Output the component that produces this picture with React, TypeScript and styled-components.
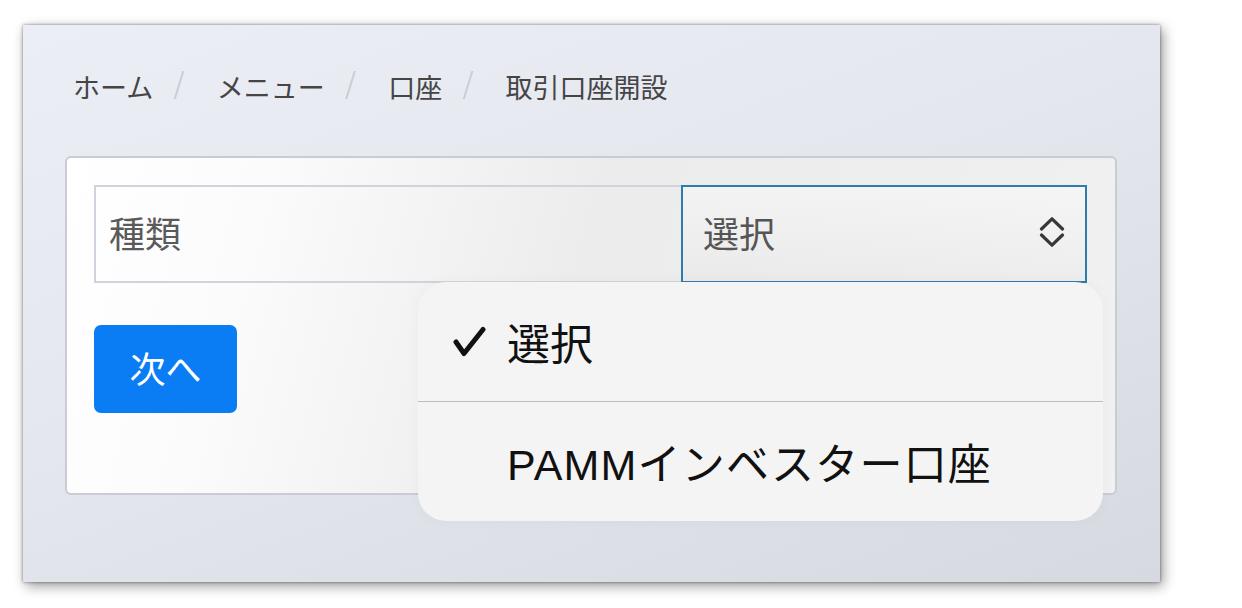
import React from "react";
import styled, { createGlobalStyle } from "styled-components";

const GlobalStyle = createGlobalStyle`
  html, body {
    margin: 0;
    padding: 0;
    background: #ffffff;
  }
  body {
    font-family: "Noto Sans CJK JP", "Noto Sans", sans-serif;
  }
`;

const Page = styled.div`
  width: 1242px;
  height: 608px;
  box-sizing: border-box;
  padding: 25px 0 0 23px;
  overflow: hidden;
`;

const Screen = styled.div`
  width: 1137px;
  height: 557px;
  box-sizing: border-box;
  padding: 42px 43px 0 42px;
  display: flex;
  flex-direction: column;
  background: linear-gradient(160deg, #ebeef5 0%, #e4e7ee 45%, #d6d9e0 100%);
  box-shadow: 0 0 3px rgba(0, 0, 0, 0.45), 3px 4px 12px rgba(0, 0, 0, 0.4);
`;

const Breadcrumb = styled.nav`
  display: flex;
  align-items: center;
  height: 40px;
  padding-left: 8px;
  font-size: 27px;
  line-height: 40px;
  color: #454545;
`;

const Crumb = styled.span`
  white-space: nowrap;
`;

const Sep = styled.span`
  margin: 0 32px 0 20px;
  color: #c8cbd1;
  font-family: "DejaVu Sans", sans-serif;
  font-weight: 200;
  font-size: 34px;
  transform: translateY(-3px);
`;

const Card = styled.div`
  position: relative;
  margin-top: 49px;
  border: 2px solid #c9ccd4;
  border-radius: 6px;
  padding: 27px 28px 80px 27px;
  background: linear-gradient(105deg, #ffffff 0%, #fbfbfb 18%, #ececec 48%, #eeeeee 75%, #f1f1f1 100%);
`;

const FieldRow = styled.div`
  display: flex;
  height: 98px;
`;

const LabelCell = styled.div`
  flex: 0 0 587px;
  box-sizing: border-box;
  display: flex;
  align-items: center;
  padding: 0 0 4px 13px;
  border: 2px solid #cfd3db;
  border-right: none;
  font-size: 36px;
  color: #5a5a5a;
`;

const SelectCell = styled.div`
  flex: 1;
  box-sizing: border-box;
  display: flex;
  align-items: center;
  justify-content: space-between;
  padding: 0 20px 4px 20px;
  border: 2px solid #2f7bab;
  background: linear-gradient(to bottom, rgba(255, 255, 255, 0.35), rgba(0, 0, 0, 0.01));
  font-size: 36px;
  color: #555555;
`;

const NextButton = styled.button`
  display: flex;
  align-items: center;
  justify-content: center;
  margin-top: 42px;
  width: 143px;
  height: 88px;
  border: none;
  border-radius: 7px;
  background: #0a7cf4;
  color: #ffffff;
  font-family: "Noto Sans CJK JP", sans-serif;
  font-size: 36px;
  padding: 0 0 4px 0;
`;

const Menu = styled.div`
  position: absolute;
  left: 351px;
  top: 124px;
  width: 685px;
  border-radius: 28px;
  background: #f4f4f4;
  box-shadow: 0 0 16px rgba(0, 0, 0, 0.03);
  overflow: hidden;
`;

const MenuItem = styled.div<{ $indent: number }>`
  display: flex;
  align-items: center;
  gap: 21px;
  height: 119px;
  padding-left: ${(p) => p.$indent}px;
  font-family: "Liberation Sans", "Noto Sans CJK JP", sans-serif;
  font-size: 43px;
  color: #111111;
`;

const MenuText = styled.span<{ $spacing?: number }>`
  padding-bottom: 2px;
  letter-spacing: ${(p) => p.$spacing ?? 0}px;
`;

const Divider = styled.div`
  height: 1px;
  background: #bdbdbd;
`;

const CheckIcon = () => (
  <svg width="33" height="31" viewBox="0 0 33 31" aria-hidden="true">
    <path
      d="M3 16 L11 27.5 L30 3.5"
      fill="none"
      stroke="#111"
      strokeWidth="5"
      strokeLinecap="round"
      strokeLinejoin="round"
    />
  </svg>
);

const UpDownIcon = () => (
  <svg width="26" height="30" viewBox="0 0 26 30" aria-hidden="true">
    <path
      d="M2.5 12 L13 1.8 L23.5 12 M2.5 18 L13 28.2 L23.5 18"
      fill="none"
      stroke="#383838"
      strokeWidth="3.2"
      strokeLinecap="round"
      strokeLinejoin="round"
    />
  </svg>
);

export default function App() {
  return (
    <>
      <GlobalStyle />
      <Page>
        <Screen>
          <Breadcrumb>
            <Crumb>ホーム</Crumb>
            <Sep>/</Sep>
            <Crumb>メニュー</Crumb>
            <Sep>/</Sep>
            <Crumb>口座</Crumb>
            <Sep>/</Sep>
            <Crumb>取引口座開設</Crumb>
          </Breadcrumb>
          <Card>
            <FieldRow>
              <LabelCell>種類</LabelCell>
              <SelectCell>
                <span>選択</span>
                <UpDownIcon />
              </SelectCell>
            </FieldRow>
            <NextButton>次へ</NextButton>
            <Menu>
              <MenuItem $indent={35}>
                <CheckIcon />
                <MenuText>選択</MenuText>
              </MenuItem>
              <Divider />
              <MenuItem $indent={89}>
                <MenuText $spacing={1.2}>PAMMインベスター口座</MenuText>
              </MenuItem>
            </Menu>
          </Card>
        </Screen>
      </Page>
    </>
  );
}
